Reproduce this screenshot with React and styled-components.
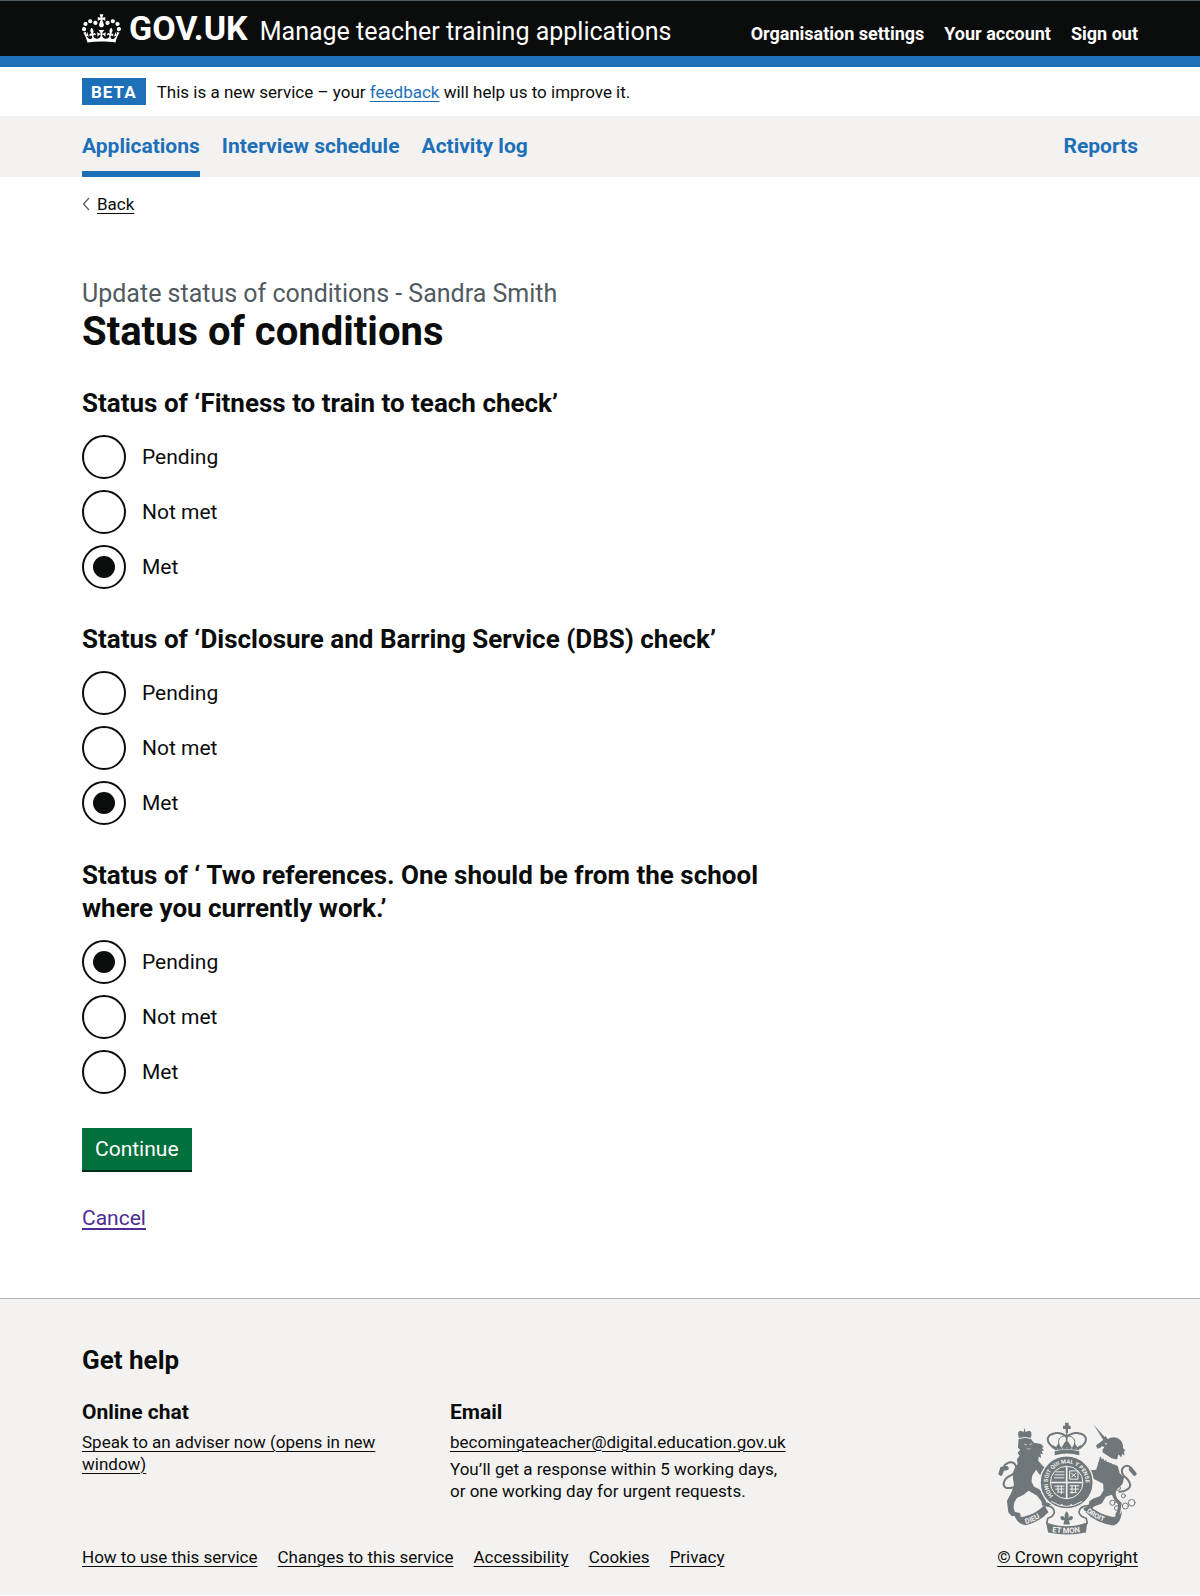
import React, { useState } from "react";
import styled, { createGlobalStyle } from "styled-components";

const ink = "#0b0c0c";
const blue = "#1d70b8";
const grey = "#505a5f";
const pale = "#f3f2f1";

const GlobalStyle = createGlobalStyle`
  *, *::before, *::after { box-sizing: border-box; }
  body {
    margin: 0;
    background: #fff;
    color: ${ink};
    font-family: Roboto, "Liberation Sans", sans-serif;
    font-size: 17px;
    line-height: 22px;
  }
`;

const Container = styled.div`
  padding: 0 62px 0 82px;
`;

const Link = styled.a`
  color: ${(p) => p.$color || ink};
  text-decoration: underline;
  text-decoration-thickness: ${(p) => (p.$large ? 2 : 1)}px;
  text-underline-offset: 3px;
`;

/* Header */
const Header = styled.header`
  background: ${ink};
  border-top: 1px solid ${grey};
  border-bottom: 11px solid ${blue};
`;

const HeaderRow = styled(Container)`
  display: flex;
  align-items: baseline;
  min-height: 55px;
  padding-top: 8px;
`;

const HomeLink = styled.a`
  display: flex;
  align-items: baseline;
  gap: 8px;
  color: #fff;
  font-size: 34px;
  font-weight: 700;
  line-height: 38px;
  text-decoration: none;
`;

const CrownIcon = styled.svg`
  align-self: center;
`;

const ServiceLink = styled.a`
  margin-left: 12px;
  color: #fff;
  font-size: 25px;
  line-height: 33px;
  text-decoration: none;
`;

const AccountNav = styled.nav`
  display: flex;
  gap: 20px;
  margin-left: auto;
`;

const AccountLink = styled.a`
  color: #fff;
  font-size: 18px;
  font-weight: 700;
  text-decoration: none;
`;

/* Phase banner */
const PhaseBanner = styled(Container)`
  display: flex;
  align-items: center;
  gap: 11px;
  padding-top: 11px;
  padding-bottom: 11px;
`;

const PhaseTag = styled.strong`
  padding: 3px 9px 2px;
  background: ${blue};
  color: #fff;
  letter-spacing: 1px;
`;

const PhaseText = styled.p`
  margin: 0;
`;

/* Primary navigation */
const PrimaryNav = styled.nav`
  background: ${pale};
`;

const NavRow = styled(Container)`
  display: flex;
  gap: 22px;
`;

const NavLink = styled.a`
  padding: 17px 0 11px;
  border-bottom: 6px solid ${(p) => (p.$current ? blue : "transparent")};
  margin-left: ${(p) => (p.$end ? "auto" : 0)};
  color: ${blue};
  font-size: 21px;
  font-weight: 700;
  line-height: 27px;
  text-decoration: none;
`;

/* Main content */
const BackLink = styled.div`
  display: flex;
  align-items: center;
  gap: 7px;
  padding-top: 16px;
`;

const Main = styled.main`
  max-width: 693px;
  padding: 62px 0 66px;
`;

const Title = styled.h1`
  margin: 0 0 33px;
  font-size: 40px;
  line-height: 44px;
`;

const Caption = styled.span`
  display: block;
  color: ${grey};
  font-size: 25px;
  font-weight: 400;
  line-height: 33px;
`;

const Form = styled.form`
  display: flex;
  flex-direction: column;
  align-items: flex-start;
  gap: 34px;
`;

const Group = styled.fieldset`
  min-width: 0;
  margin: 0;
  padding: 0;
  border: 0;
`;

const Legend = styled.legend`
  margin-bottom: 15px;
  padding: 0;
  font-size: 26px;
  font-weight: 700;
  line-height: 33px;
`;

const Options = styled.div`
  display: flex;
  flex-direction: column;
  align-items: flex-start;
  gap: 11px;
`;

const Option = styled.label`
  display: flex;
  align-items: center;
  gap: 16px;
  font-size: 21px;
  line-height: 27px;
  cursor: pointer;
`;

const Radio = styled.input`
  appearance: none;
  display: grid;
  place-items: center;
  width: 44px;
  height: 44px;
  margin: 0;
  border: 2px solid ${ink};
  border-radius: 50%;
  cursor: pointer;

  &:checked::before {
    content: "";
    width: 22px;
    height: 22px;
    border-radius: 50%;
    background: ${ink};
  }
  &:focus-visible {
    outline: 3px solid #fd0;
  }
`;

const Submit = styled.button`
  padding: 8px 13px 7px;
  border: 0;
  border-radius: 0;
  background: #00703c;
  box-shadow: 0 2px 0 #002d18;
  color: #fff;
  font-family: inherit;
  font-size: 21px;
  line-height: 27px;
  cursor: pointer;
`;

const CancelRow = styled.p`
  margin: 35px 0 0;
  font-size: 21px;
  line-height: 27px;
`;

/* Footer */
const Footer = styled.footer`
  border-top: 1px solid #b1b4b6;
  background: ${pale};
`;

const FooterRow = styled(Container)`
  display: flex;
  align-items: flex-end;
  justify-content: space-between;
  gap: 16px;
  padding-top: 45px;
  padding-bottom: 27px;
`;

const FooterMain = styled.div`
  flex: 1;
`;

const HelpTitle = styled.h2`
  margin: 0 0 22px;
  font-size: 26px;
  line-height: 33px;
`;

const HelpColumns = styled.div`
  display: grid;
  grid-template-columns: repeat(2, minmax(0, 352px));
  gap: 16px;
  margin-bottom: 39px;
`;

const HelpHeading = styled.h3`
  margin: 0 0 5px;
  font-size: 21px;
  line-height: 27px;
`;

const HelpText = styled.p`
  margin: 0 0 5px;
`;

const FooterLinks = styled.ul`
  display: flex;
  flex-wrap: wrap;
  gap: 20px;
  margin: 0;
  padding: 0;
  list-style: none;
`;

const Copyright = styled.div`
  display: flex;
  flex-direction: column;
  align-items: center;
  gap: 10px;
`;

function Crown() {
  return (
    <CrownIcon width="39" height="29" viewBox="0 0 132 97" aria-hidden="true">
      <path
        fill="currentColor"
        fillRule="evenodd"
        d="M25 30.2c3.5 1.5 7.7-.2 9.1-3.7 1.5-3.6-.2-7.8-3.9-9.2-3.6-1.4-7.6.3-9.1 3.9-1.4 3.5.3 7.5 3.9 9zM9 39.5c3.6 1.5 7.8-.2 9.2-3.7 1.5-3.6-.2-7.8-3.9-9.1-3.6-1.5-7.6.2-9.1 3.8-1.4 3.5.3 7.5 3.8 9zM4.4 57.2c3.5 1.5 7.7-.2 9.1-3.8 1.5-3.6-.2-7.7-3.9-9.1-3.5-1.5-7.6.3-9.1 3.8-1.4 3.5.3 7.6 3.9 9.1zm38.3-21.4c3.5 1.5 7.7-.2 9.1-3.8 1.5-3.6-.2-7.7-3.9-9.1-3.6-1.5-7.6.3-9.1 3.8-1.3 3.6.4 7.7 3.9 9.1zm64.4-5.6c-3.6 1.5-7.8-.2-9.1-3.7-1.5-3.6.2-7.8 3.8-9.2 3.6-1.4 7.7.3 9.2 3.9 1.3 3.5-.4 7.5-3.9 9zm15.9 9.3c-3.6 1.5-7.7-.2-9.1-3.7-1.5-3.6.2-7.8 3.7-9.1 3.6-1.5 7.7.2 9.2 3.8 1.5 3.5-.3 7.5-3.8 9zm4.7 17.7c-3.6 1.5-7.8-.2-9.2-3.8-1.5-3.6.2-7.7 3.9-9.1 3.6-1.5 7.7.3 9.2 3.8 1.3 3.5-.4 7.6-3.9 9.1zM89.3 35.8c-3.6 1.5-7.8-.2-9.2-3.8-1.4-3.6.2-7.7 3.9-9.1 3.6-1.5 7.7.3 9.2 3.8 1.4 3.6-.3 7.7-3.9 9.1zM69.7 17.7l8.9 4.7V9.3l-8.9 2.8c-.2-.3-.5-.6-.9-.9L72.4 0H59.6l3.5 11.2c-.3.3-.6.5-.9.9l-8.8-2.8v13.1l8.8-4.7c.3.3.6.7.9.9l-5 15.4v.1c-.2.8-.4 1.6-.4 2.4 0 4.1 3.1 7.5 7 8.1h.2c.3 0 .7.1 1 .1.4 0 .7 0 1-.1h.2c4-.6 7.1-4.1 7.1-8.1 0-.8-.1-1.7-.4-2.4V34l-5.1-15.4c.4-.2.7-.6 1-.9zM66 92.8c16.9 0 32.8 1.1 47.1 3.2 4-16.9 8.9-26.7 14-33.5l-9.6-3.4c1 4.9 1.1 7.2 0 10.2-1.5-1.4-3-4.3-4.2-8.7L108.6 76c2.8-2 5-3.2 7.5-3.3-4.4 9.4-10 11.9-13.6 11.2-4.3-.8-6.3-4.6-5.6-7.9 1-4.7 5.7-5.9 8-.5 4.3-8.7-3-11.4-7.6-8.8 7.1-7.2 7.9-13.5 2.1-21.1-8 6.1-8.1 12.3-4.5 20.8-4.7-5.4-12.1-2.5-9.5 6.2 3.4-5.2 7.9-2 7.2 3.1-.6 4.3-6.4 7.8-13.5 7.2-10.3-.9-10.9-8-11.2-13.8 2.5-.5 7.1 1.8 11 7.3L80.2 60c-4.1 4.4-8 5.3-12.3 5.4 1.4-4.4 8-11.6 8-11.6H55.5s6.4 7.2 7.9 11.6c-4.2-.1-8-1-12.3-5.4l1.4 16.4c3.9-5.5 8.5-7.7 10.9-7.3-.3 5.8-.9 12.8-11.1 13.8-7.2.6-12.9-2.9-13.5-7.2-.7-5 3.8-8.3 7.1-3.1 2.7-8.7-4.6-11.6-9.4-6.2 3.7-8.5 3.6-14.7-4.6-20.8-5.8 7.6-5 13.9 2.2 21.1-4.7-2.6-11.9.1-7.7 8.8 2.3-5.5 7.1-4.2 8.1.5.7 3.3-1.3 7.1-5.7 7.9-3.5.7-9-1.8-13.5-11.2 2.5.1 4.7 1.3 7.5 3.3l-4.7-15.4c-1.2 4.4-2.7 7.2-4.3 8.7-1.1-3-.9-5.3 0-10.2l-9.5 3.4c5 6.9 9.9 16.7 14 33.5 14.8-2.1 30.8-3.2 47.7-3.2z"
      />
    </CrownIcon>
  );
}

function Chevron() {
  return (
    <svg width="8" height="14" viewBox="0 0 8 14" aria-hidden="true">
      <path d="M7 1 1.5 7 7 13" fill="none" stroke={grey} strokeWidth="1.2" />
    </svg>
  );
}

const CrestText = styled.text`
  fill: ${pale};
  font-family: Roboto, sans-serif;
  font-size: ${(p) => p.$size}px;
  font-weight: 700;
`;

/* Links of the unicorn's chain: centre and radius */
const chain = [
  [391, 283, 8],
  [404, 299, 7],
  [430, 293, 9],
  [449, 283, 10],
  [424, 262, 6],
  [408, 239, 7],
  [414, 212, 6],
];

/* Royal coat of arms: lion, crowned shield with garter, unicorn, motto scroll */
function Crest() {
  return (
    <svg width="140" height="115" viewBox="46 38 422 344" aria-hidden="true">
      <defs>
        <path id="garter" d="M213 262A57 57 0 1 1 293 262" />
        <path id="dieu" d="M130 347Q165 338 196 311" />
        <path id="etmon" d="M209 371Q254 379 306 370" />
        <path id="droit" d="M312 310Q342 336 392 348" />
      </defs>
      <g fill="#6f777b" stroke="none">
        {/* lion */}
        <path d="M108 84q-5-16 6-18l9 4 3-13 3 13 10-4q11 2 7 18l-2 5q-18-5-34 0z" />
        <path d="M108 92q20-8 38 0l8 10 22 4 8 10-6 1 7 9-8 0 5 11-8-2 2 13-7-4-2 12 14 16 17 9 6 12-7-1 4 10-9-4-4 12-7-9-11-4-9-13-12 18-2 18 8 15 17 8 11 18q6 12 9 21h10l8 9-9-1-3 7-9-6-10 1-2-13-13-17-26-15-15 12-20 10-8 13-2 16 4 13 15 3 3 9H87l-10-11-4-34 14-27 7-23-3-19q-2-25 14-42l-2-14 8-12-6-8 8-10-7-6z" />
        {/* unicorn */}
        <path d="m334 47 38 43-7 6zM342 110l20-15 8-14 6 10q17-9 30-3 18 9 17 30l8 9-6 1 3 12-8-4-2 11-9-10-4 16-17-4-26-17q-4-9 4-15-6-8-11 0l-9 3-4-7z" />
        <path d="m354 144 26 16 27 12 6 22 13 13-5 20-17 16q-7 14 2 28l13 13-4 25-5 17-10 0 0-9 6-11 2-17-11-14-8-16-18 6-12 20-22 9-18 13-12 1-4-8 15-7 4-15 12-8 20-7 10-17-1-20-18-9-18-10-10-12-8-16-14-3-5-9 14-3 14 8 8 13 16-1z" />
        {/* shield */}
        <circle cx="253" cy="222" r="80" stroke={pale} strokeWidth="4" />
        {/* crown */}
        <path d="M217 140q36-10 74 0v-12q-38-9-74 0zM248 42h11v9h6v10h-8v12h-7V61h-8V51h6z" />
        <path d="m217 125-7-17 11 7 8-12 8 14 10-16 6-4 6 4 10 16 8-14 8 12 12-7-7 17q-35-7-73 0z" />
        {/* scroll */}
        <path d="M92 306q12 20 28 20 40-8 66-36l12 22q-28 30-68 39-32-3-38-45z" />
        <path d="M320 290q28 28 72 36 18 0 28-18-4 40-26 44-54-8-84-40z" />
        <path d="M191 343q61 22 124 0l-4 30q-56 12-114 0z" />
      </g>
      <g fill="none" stroke="#6f777b" strokeLinecap="round">
        {/* folds of the scroll */}
        <path strokeWidth="5" d="M188 292q26 0 28 20-4 14-20 18l-3 15M320 292q-28 0-30 20 4 14 22 18l3 15" />
        {/* tails */}
        <path strokeWidth="6" d="M90 237q-28 7-27-13 4-16 23-24 18-10 14-28-6-14-22-10-12 5-16 15" />
        <path strokeWidth="13" d="m58 183-4 12m4-14 14-2" />
        <path strokeWidth="6" d="M412 250q30-2 33-20-4-17-20-28-11-14-1-26 13-10 23 2 7 7 6 14" />
        <path strokeWidth="12" d="m446 182 12 14" />
        {/* arches of the crown */}
        <path strokeWidth="6" strokeDasharray="7 1" d="M213 117q-28-23-10-38 26-14 48 4M294 117q28-23 10-38-25-14-49 4" />
        <path strokeWidth="5" d="M253 76v26" />
        <path strokeWidth="3" d="M229 105q-5-18 16-24m32 24q5-18-18-24" />
        {chain.map(([cx, cy, r]) => (
          <circle key={cx} cx={cx} cy={cy} r={r} strokeWidth="3" />
        ))}
      </g>
      {/* fleur-de-lis */}
      <path
        fill="#6f777b"
        d="M253 309q9 9 5 20 6-9 12-5 5 7-3 12h-7l3 13h-20l3-13h-7q-8-5-3-12 6-4 12 5-4-11 5-20z"
      />
      {/* garter and shield quarters */}
      <g fill="none" stroke={pale}>
        <circle cx="253" cy="222" r="49" strokeWidth="3" />
        <path strokeWidth="5" d="M253 174v96m-48-48h96" />
        <path strokeWidth="3" d="M220 190h26m-29 9h29m-31 9h31m16-21h25v25h-25zm5 7 14 12m0-12-14 12M216 233h30m-27 9h27m-22 9h22m16-19h29m-29 10h28m-28 10h21M227 230v22m10-22v27m32-27v27m11-27v22" />
        <path strokeWidth="3" d="M207 279q46 30 92 0" />
        <path strokeWidth="4" strokeLinecap="round" d="M238 289h1m27 0h1" />
        <path strokeWidth="2" d="M111 89q16-6 34 0M125 106l8 3m8-1 8-3m-17 14q6 6 12 0" />
        <path strokeWidth="3" d="m368 105 7 1m-17 12 8-2M225 121h2m12-2h2m12-1h2m12 1h2m12 2h2" />
        <path strokeWidth="5" strokeDasharray="5 4" d="m350 143 20 12 28 12" />
      </g>
      <CrestText $size={17}>
        <textPath href="#garter">HONI SOIT QUI MAL Y PENSE</textPath>
      </CrestText>
      <CrestText $size={22}>
        <textPath href="#dieu">DIEU</textPath>
      </CrestText>
      <CrestText $size={23}>
        <textPath href="#etmon">ET MON</textPath>
      </CrestText>
      <CrestText $size={21}>
        <textPath href="#droit">DROIT</textPath>
      </CrestText>
    </svg>
  );
}

const statuses = ["Pending", "Not met", "Met"];

const conditions = [
  { id: "fitness", legend: "Status of ‘Fitness to train to teach check’", value: "Met" },
  { id: "dbs", legend: "Status of ‘Disclosure and Barring Service (DBS) check’", value: "Met" },
  {
    id: "references",
    legend: "Status of ‘ Two references. One should be from the school where you currently work.’",
    value: "Pending",
  },
];

const footerLinks = [
  "How to use this service",
  "Changes to this service",
  "Accessibility",
  "Cookies",
  "Privacy",
];

function Condition({ id, legend, value }) {
  const [status, setStatus] = useState(value);
  return (
    <Group>
      <Legend>{legend}</Legend>
      <Options>
        {statuses.map((s) => (
          <Option key={s}>
            <Radio
              type="radio"
              name={id}
              value={s}
              checked={status === s}
              onChange={() => setStatus(s)}
            />
            {s}
          </Option>
        ))}
      </Options>
    </Group>
  );
}

export default function App() {
  return (
    <>
      <GlobalStyle />
      <Header>
        <HeaderRow>
          <HomeLink href="#">
            <Crown />
            GOV.UK
          </HomeLink>
          <ServiceLink href="#">Manage teacher training applications</ServiceLink>
          <AccountNav aria-label="Account">
            <AccountLink href="#">Organisation settings</AccountLink>
            <AccountLink href="#">Your account</AccountLink>
            <AccountLink href="#">Sign out</AccountLink>
          </AccountNav>
        </HeaderRow>
      </Header>

      <PhaseBanner>
        <PhaseTag>BETA</PhaseTag>
        <PhaseText>
          This is a new service – your{" "}
          <Link href="#" $color={blue}>
            feedback
          </Link>{" "}
          will help us to improve it.
        </PhaseText>
      </PhaseBanner>

      <PrimaryNav aria-label="Primary">
        <NavRow>
          <NavLink href="#" $current aria-current="page">
            Applications
          </NavLink>
          <NavLink href="#">Interview schedule</NavLink>
          <NavLink href="#">Activity log</NavLink>
          <NavLink href="#" $end>
            Reports
          </NavLink>
        </NavRow>
      </PrimaryNav>

      <Container>
        <BackLink>
          <Chevron />
          <Link href="#">Back</Link>
        </BackLink>
        <Main>
          <Title>
            <Caption>Update status of conditions - Sandra Smith</Caption>
            Status of conditions
          </Title>
          <Form onSubmit={(e) => e.preventDefault()}>
            {conditions.map((c) => (
              <Condition key={c.id} {...c} />
            ))}
            <Submit type="submit">Continue</Submit>
          </Form>
          <CancelRow>
            <Link href="#" $color="#4c2c92" $large>
              Cancel
            </Link>
          </CancelRow>
        </Main>
      </Container>

      <Footer>
        <FooterRow>
          <FooterMain>
            <HelpTitle>Get help</HelpTitle>
            <HelpColumns>
              <div>
                <HelpHeading>Online chat</HelpHeading>
                <HelpText>
                  <Link href="#">Speak to an adviser now (opens in new window)</Link>
                </HelpText>
              </div>
              <div>
                <HelpHeading>Email</HelpHeading>
                <HelpText>
                  <Link href="mailto:becomingateacher@digital.education.gov.uk">
                    becomingateacher@digital.education.gov.uk
                  </Link>
                </HelpText>
                <HelpText>
                  You’ll get a response within 5 working days,
                  <br />
                  or one working day for urgent requests.
                </HelpText>
              </div>
            </HelpColumns>
            <FooterLinks>
              {footerLinks.map((text) => (
                <li key={text}>
                  <Link href="#">{text}</Link>
                </li>
              ))}
            </FooterLinks>
          </FooterMain>
          <Copyright>
            <Crest />
            <Link href="#">© Crown copyright</Link>
          </Copyright>
        </FooterRow>
      </Footer>
    </>
  );
}
